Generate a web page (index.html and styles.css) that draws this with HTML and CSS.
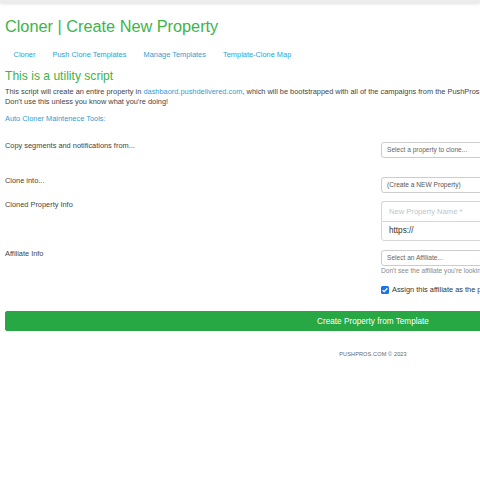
FILE: index.html
```html
<!DOCTYPE html>
<html>
<head>
<meta charset="utf-8">
<link rel="stylesheet" href="styles.css">
</head>
<body>
<div class="topbar"></div>
<div class="page">
  <h1 class="title">Cloner | Create New Property</h1>
  <nav class="nav">
    <a class="nav-link">Cloner</a>
    <a class="nav-link">Push Clone Templates</a>
    <a class="nav-link">Manage Templates</a>
    <a class="nav-link">Template-Clone Map</a>
  </nav>
  <h2 class="subtitle">This is a utility script</h2>
  <p class="intro">This script will create an entire property in <a class="link">dashbaord.pushdelivered.com</a>, which will be bootstrapped with all of the campaigns from the PushPros template properties you select.<br>Don't use this unless you know what you're doing!</p>
  <p class="tools"><a class="link">Auto Cloner Maintenece Tools:</a></p>

  <div class="form-row row1">
    <div class="label">Copy segments and notifications from...</div>
    <div class="field"><div class="select">Select a property to clone...</div></div>
  </div>
  <div class="form-row row2">
    <div class="label">Clone into...</div>
    <div class="field"><div class="select">(Create a NEW Property)</div></div>
  </div>
  <div class="form-row row3">
    <div class="label">Cloned Property Info</div>
    <div class="field">
      <div class="input top placeholder">New Property Name *</div>
      <div class="input bottom">https://</div>
    </div>
  </div>
  <div class="form-row row4">
    <div class="label">Affiliate Info</div>
    <div class="field">
      <div class="select">Select an Affiliate...</div>
      <div class="help">Don't see the affiliate you're looking for? Add one in the PushPros dashboard.</div>
      <label class="check"><span class="box"><svg viewBox="0 0 8 8" width="8" height="8"><path d="M1.6 4.2 L3.2 5.7 L6.4 2.3" fill="none" stroke="#fff" stroke-width="1.3"/></svg></span>Assign this affiliate as the property owner</label>
    </div>
  </div>

  <button class="btn">Create Property from Template</button>
  <footer class="footer">PUSHPROS.COM © 2023</footer>
</div>
</body>
</html>
```
FILE: styles.css
```css
html, body {
  margin: 0;
  padding: 0;
  background: #fff;
  overflow: hidden;
}
body {
  font-family: "Liberation Sans", Arial, sans-serif;
  color: #444;
  font-size: 7.4px;
  line-height: 10px;
}
.topbar {
  height: 3px;
  background: #ececec;
  box-shadow: 0 1px 3px rgba(0,0,0,0.12);
}
.page {
  width: 736px;
  margin-left: 5px;
}
.title {
  margin: 13px 0 0;
  font-size: 16.3px;
  line-height: 20px;
  font-weight: normal;
  color: #3cb44b;
}
.nav {
  display: flex;
  margin-top: 13px;
  height: 12px;
}
.nav-link {
  padding: 0 8.6px;
  color: #2a9fd6;
  line-height: 12px;
}
.subtitle {
  margin: 8px 0 0;
  font-size: 12.1px;
  line-height: 15px;
  font-weight: normal;
  color: #3cb44b;
}
.intro {
  margin: 3px 0 0;
  white-space: nowrap;
}
.link { color: #2a9fd6; }
.tools { margin: 7px 0 0; }
.form-row {
  display: grid;
  grid-template-columns: 376px 1fr;
  align-items: start;
}
.label { line-height: 10px; }
.field { margin-top: 1px; }
.row1 { margin-top: 17px; }
.row2 { margin-top: 18px; }
.row3 { margin-top: 7px; }
.row4 { margin-top: 8px; }
.select {
  height: 14px;
  border: 1px solid #ccc;
  border-radius: 3px;
  padding-left: 5px;
  font-size: 6.6px;
  line-height: 14px;
  color: #666;
  white-space: nowrap;
}
.row2 .select { color: #555; }
.input {
  height: 18px;
  border: 1px solid #d6d6d6;
  padding-left: 7px;
  font-size: 8.2px;
  line-height: 18px;
  color: #333;
  white-space: nowrap;
}
.input.top { border-radius: 3px 3px 0 0; border-bottom: none; height: 19px; line-height: 19px; }
.input.bottom { border-radius: 0 0 3px 3px; }
.placeholder { color: #c0c4cc; font-size: 7.6px; }
.help {
  color: #8a8a8a;
  font-size: 6.6px;
  line-height: 10px;
  white-space: nowrap;
}
.check {
  display: flex;
  align-items: center;
  margin-top: 9px;
  white-space: nowrap;
  color: #333;
  height: 10px;
}
.box {
  width: 8px;
  height: 8px;
  background: #1a73e8;
  border-radius: 1.5px;
  margin-right: 3px;
  display: flex;
}
.btn {
  display: block;
  width: 736px;
  height: 20px;
  margin-top: 16px;
  background: #28a745;
  border: 1px solid #28a745;
  border-radius: 2px;
  color: #fff;
  font-family: "Liberation Sans", Arial, sans-serif;
  font-size: 8.2px;
  padding: 0;
}
.footer {
  text-align: center;
  margin-top: 18px;
  font-size: 5.6px;
  line-height: 10px;
  color: #666;
  letter-spacing: 0.1px;
}
```
